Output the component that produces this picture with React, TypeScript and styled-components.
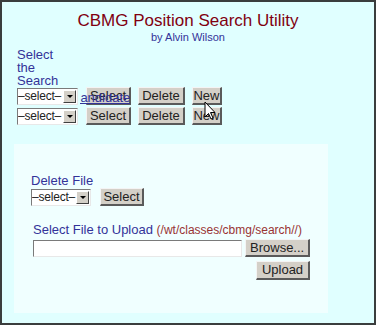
import React from 'react'
import styled, { createGlobalStyle } from 'styled-components'

const GlobalStyle = createGlobalStyle`
  html, body {
    margin: 0;
    padding: 0;
    background: #ffffff;
  }
  body {
    font-family: "Liberation Sans", Arial, sans-serif;
  }
`

const Frame = styled.div`
  position: relative;
  width: 376px;
  height: 325px;
  box-sizing: border-box;
  border: 2px solid #3a3d3d;
  background: #e0ffff;
  padding: 9px 0 0 15px;
  display: flex;
  flex-direction: column;
  overflow: hidden;
`

const Title = styled.h1`
  margin: 0 0 0 -15px;
  font-size: 17px;
  line-height: 20px;
  font-weight: normal;
  color: #800010;
  text-align: center;
`

const Byline = styled.div`
  margin: 0 0 0 -15px;
  font-size: 11px;
  line-height: 12px;
  color: #333399;
  text-align: center;
`

const Label = styled.div<{ $width?: number }>`
  font-size: 13px;
  line-height: 13px;
  color: #333399;
  width: ${p => (p.$width ? `${p.$width}px` : 'auto')};
`

const SearchBlock = styled.div`
  position: relative;
  margin-top: 5px;
  display: flex;
  flex-direction: column;
`

const Rows = styled.div`
  position: relative;
  display: flex;
  flex-direction: column;
  gap: 2px;
`

const Row = styled.div<{ $gap?: number }>`
  display: flex;
  align-items: center;
  gap: ${p => p.$gap ?? 7}px;
`

const Fake = styled.div<{ $width: number }>`
  width: ${p => p.$width}px;
  height: 17px;
  box-sizing: border-box;
  border-top: 1px solid #7a7a7a;
  border-left: 1px solid #7a7a7a;
  border-right: 1px solid #e8e8e8;
  border-bottom: 1px solid #e8e8e8;
  background: #ffffff;
  display: flex;
  align-items: center;
  margin-right: 1px;
`

const FakeText = styled.span`
  flex: 1;
  font-size: 12px;
  line-height: 15px;
  letter-spacing: -0.2px;
  color: #222;
  white-space: nowrap;
  overflow: hidden;
`

const Arrow = styled.span`
  width: 13px;
  height: 13px;
  margin-right: 1px;
  box-sizing: border-box;
  background: #d4d0c8;
  border-top: 1px solid #ffffff;
  border-left: 1px solid #ffffff;
  border-right: 1px solid #404040;
  border-bottom: 1px solid #404040;
  display: flex;
  align-items: center;
  justify-content: center;

  &::after {
    content: '';
    border-left: 3px solid transparent;
    border-right: 3px solid transparent;
    border-top: 3px solid #000;
  }
`

const Button = styled.button<{ $width: number; $height?: number }>`
  width: ${p => p.$width}px;
  height: ${p => p.$height ?? 18}px;
  padding: 0;
  margin: 0;
  box-sizing: border-box;
  background: #d4d0c8;
  border-top: 1px solid #f4f4f4;
  border-left: 1px solid #f4f4f4;
  border-right: 2px solid #5a5a5a;
  border-bottom: 2px solid #5a5a5a;
  font-family: "Liberation Sans", Arial, sans-serif;
  font-size: 13px;
  color: #222;
  line-height: 14px;
`

const CandidateLink = styled.a`
  position: absolute;
  left: 54px;
  top: 4px;
  font-size: 13px;
  line-height: 14px;
  color: #333399;
  text-decoration: underline;
  z-index: 2;
  clip-path: inset(0 0 0 9px);
`

const Cursor = styled.svg`
  position: absolute;
  left: 202px;
  top: 99px;
  z-index: 3;
`

const Panel = styled.div`
  margin-top: 19px;
  margin-left: -3px;
  width: 314px;
  height: 169px;
  background: #f0ffff;
  box-sizing: border-box;
  padding: 30px 0 0 17px;
  display: flex;
  flex-direction: column;
`

const UploadBlock = styled.div`
  margin-top: 17px;
  margin-left: 2px;
  display: flex;
  flex-direction: column;
  width: 277px;
`

const Path = styled.span`
  color: #993333;
  font-size: 12px;
`

const FileInput = styled.div`
  width: 210px;
  height: 17px;
  box-sizing: border-box;
  border-top: 1px solid #7a7a7a;
  border-left: 1px solid #7a7a7a;
  border-right: 1px solid #e8e8e8;
  border-bottom: 1px solid #e8e8e8;
  background: #ffffff;
`

const RightRow = styled.div`
  display: flex;
  justify-content: flex-end;
  margin-top: 4px;
`

const SelectBox = ({ width }: { width: number }) => (
  <Fake $width={width}>
    <FakeText>–select–</FakeText>
    <Arrow />
  </Fake>
)

export default function App() {
  return (
    <>
      <GlobalStyle />
      <Frame>
        <Title>CBMG Position Search Utility</Title>
        <Byline>by Alvin Wilson</Byline>
        <SearchBlock>
          <Label $width={50}>Select the Search</Label>
          <Rows>
            <Row>
              <SelectBox width={61} />
              <Button $width={45}>Select</Button>
              <Button $width={47}>Delete</Button>
              <Button $width={30}>New</Button>
            </Row>
            <Row>
              <SelectBox width={61} />
              <Button $width={45}>Select</Button>
              <Button $width={47}>Delete</Button>
              <Button $width={30}>New</Button>
            </Row>
            <CandidateLink href="#">Candidate</CandidateLink>
          </Rows>
        </SearchBlock>
        <Panel>
          <Label>Delete File</Label>
          <Row $gap={8} style={{ marginTop: 1 }}>
            <SelectBox width={60} />
            <Button $width={44}>Select</Button>
          </Row>
          <UploadBlock>
            <Label>
              Select File to Upload <Path>(/wt/classes/cbmg/search//)</Path>
            </Label>
            <Row $gap={3} style={{ marginTop: 2 }}>
              <FileInput />
              <Button $width={65}>Browse...</Button>
            </Row>
            <RightRow>
              <Button $width={54} $height={19}>Upload</Button>
            </RightRow>
          </UploadBlock>
        </Panel>
        <Cursor width="12" height="19" viewBox="0 0 12 19">
          <path d="M1 1 L1 16 L4.5 12.5 L7 18 L9 17 L6.5 11.5 L11 11.5 Z" fill="#ffffff" stroke="#000" strokeWidth="1" />
        </Cursor>
      </Frame>
    </>
  )
}
